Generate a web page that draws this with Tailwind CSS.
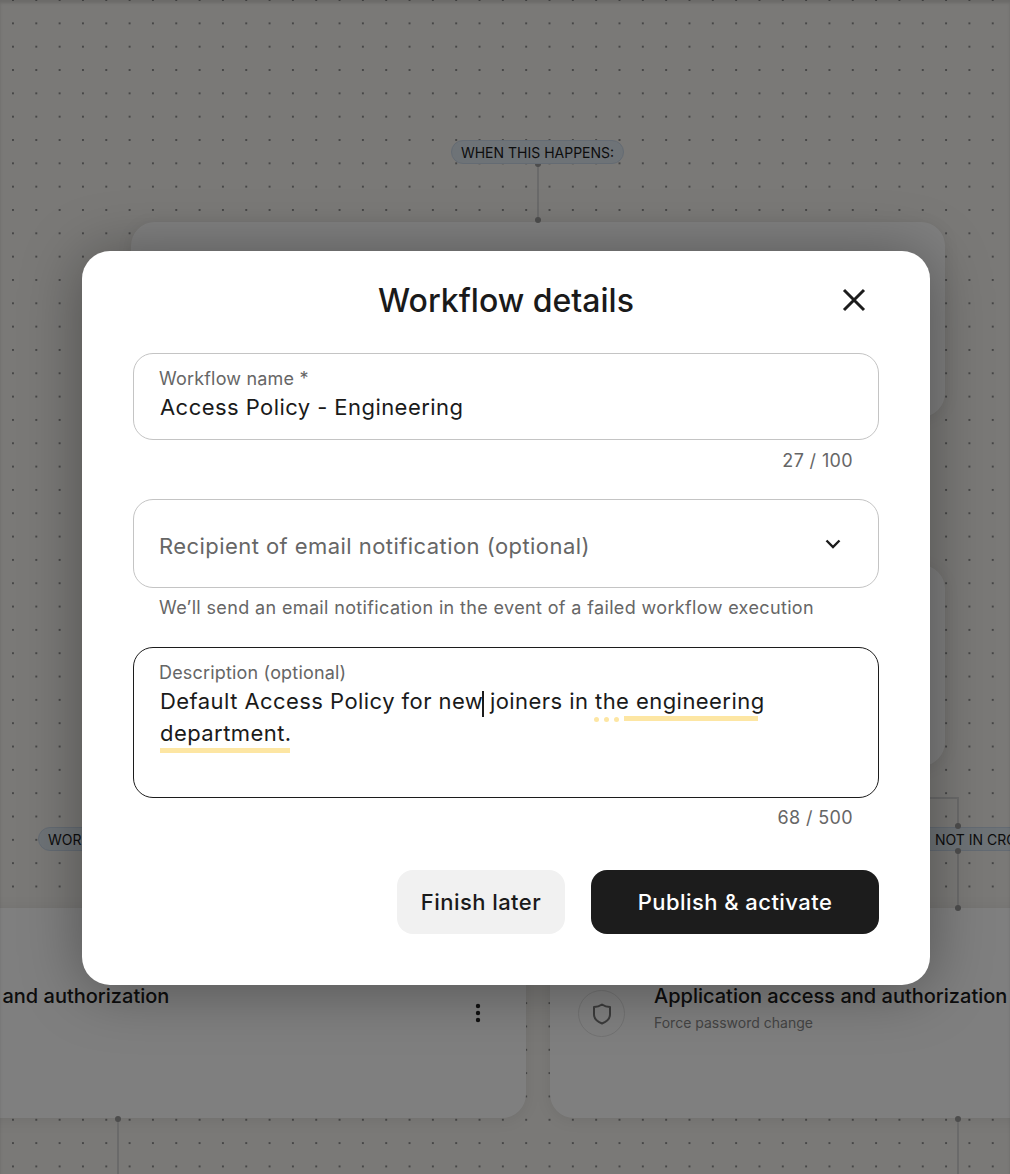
<!DOCTYPE html>
<html><head><meta charset="utf-8"><script src="https://cdn.jsdelivr.net/npm/@tailwindcss/browser@4"></script></head>
<body class="font-['Inter',sans-serif]">
<div class="relative w-[1010px] h-[1174px] overflow-hidden bg-[#f4f2ee] bg-[radial-gradient(circle,#8f8f8f_0.7px,transparent_1px)] bg-[size:23.33px_23.33px] bg-[position:1.3px_11.7px]">
  <!-- canvas -->
  <div class="absolute left-[131px] top-[222px] w-[814px] h-[195px] rounded-[24px] bg-white shadow-[0_2px_16px_rgba(0,0,0,0.08)]"></div>
  <div class="absolute left-[131px] top-[565px] w-[814px] h-[201px] rounded-[24px] bg-white shadow-[0_2px_16px_rgba(0,0,0,0.08)]"></div>
  <div class="absolute left-[-288px] top-[908px] w-[814px] h-[210px] rounded-[24px] bg-white shadow-[0_2px_16px_rgba(0,0,0,0.08)]">
    <div class="absolute left-[104px] top-[76px] text-[20px] leading-6 font-medium text-[#1a1a1a] whitespace-nowrap">Application access and authorization</div>
    <svg class="absolute left-[756px] top-[93px]" width="20" height="24" viewBox="0 0 20 24" fill="#222"><circle cx="10" cy="5" r="2.2"/><circle cx="10" cy="12" r="2.2"/><circle cx="10" cy="19" r="2.2"/></svg>
  </div>
  <div class="absolute left-[550px] top-[908px] w-[814px] h-[210px] rounded-[24px] bg-white shadow-[0_2px_16px_rgba(0,0,0,0.08)]">
    <div class="absolute left-[28px] top-[82px] w-[47px] h-[47px] rounded-full border border-[#e4e4e4] flex items-center justify-center">
      <svg width="24" height="24" viewBox="0 0 24 24" fill="none" stroke="#777" stroke-width="2" stroke-linejoin="round"><path d="M12 2.5c2.600 1.700 5.200 2.400 8 2.600v7.400c0 4-3.200 7-8 9-4.800-2-8-5-8-9V5.100c2.800-.2 5.400-.9 8-2.600z"/></svg>
    </div>
    <div class="absolute left-[104px] top-[76px] text-[20px] leading-6 font-medium text-[#1a1a1a] whitespace-nowrap">Application access and authorization</div>
    <div class="absolute left-[104px] top-[105px] text-[14px] leading-5 text-[#888] whitespace-nowrap">Force password change</div>
  </div>

  <div class="absolute left-[537px] top-[164px] w-[2px] h-[56px] bg-[#d4d4d4]"></div>
  <div class="absolute left-[535px] top-[161px] w-[6px] h-[6px] rounded-full bg-[#9a9a9a]"></div>
  <div class="absolute left-[535px] top-[217px] w-[6px] h-[6px] rounded-full bg-[#9a9a9a]"></div>
  <div class="absolute left-[451px] top-[140px] w-[173px] h-[24px] rounded-[12px] bg-[#dde6ee] border border-[#c8d6e6] flex items-center justify-center text-[14px] text-[#1a1a1a] whitespace-nowrap">WHEN THIS HAPPENS:</div>

  <div class="absolute left-[38px] top-[827px] w-[120px] h-[24px] rounded-[12px] bg-[#dde6ee] border border-[#c8d6e6] flex items-center pl-[9px] text-[14px] text-[#1a1a1a] whitespace-nowrap">WORKFLOW</div>
  <div class="absolute left-[900px] top-[827px] w-[160px] h-[24px] rounded-[12px] bg-[#dde6ee] border border-[#c8d6e6] flex items-center pl-[34px] text-[14px] text-[#1a1a1a] whitespace-nowrap">NOT IN CROWD</div>

  <div class="absolute left-[920px] top-[797px] w-[39px] h-[30px] border-t-2 border-r-2 border-[#d4d4d4]"></div>
  <div class="absolute left-[957px] top-[851px] w-[2px] h-[56px] bg-[#d4d4d4]"></div>
  <div class="absolute left-[955px] top-[823px] w-[6px] h-[6px] rounded-full bg-[#9a9a9a]"></div>
  <div class="absolute left-[955px] top-[848px] w-[6px] h-[6px] rounded-full bg-[#9a9a9a]"></div>
  <div class="absolute left-[955px] top-[905px] w-[6px] h-[6px] rounded-full bg-[#9a9a9a]"></div>
  <div class="absolute left-[117px] top-[1119px] w-[2px] h-[55px] bg-[#d4d4d4]"></div>
  <div class="absolute left-[115px] top-[1116px] w-[6px] h-[6px] rounded-full bg-[#9a9a9a]"></div>
  <div class="absolute left-[957px] top-[1119px] w-[2px] h-[55px] bg-[#d4d4d4]"></div>
  <div class="absolute left-[955px] top-[1116px] w-[6px] h-[6px] rounded-full bg-[#9a9a9a]"></div>

  <!-- overlay + modal -->
  <div class="absolute inset-0 bg-black/50 shadow-[inset_0_3px_3px_rgba(0,0,0,0.12)] pl-[82px] pt-[251px]">
    <div class="w-[848px] h-[734px] bg-white rounded-[28px] px-[51px] flex flex-col shadow-[0_4px_60px_rgba(0,0,0,0.35)]">
      <div class="relative h-[102px] shrink-0 flex items-center justify-center pb-[2px]">
        <h2 class="text-[32px] leading-10 font-medium text-[#1a1a1a]">Workflow details</h2>
        <svg class="absolute right-[13px] top-[37px]" width="24" height="24" viewBox="0 0 24 24" fill="none" stroke="#1c1c1c" stroke-width="3"><path d="M2 2l20 20M22 2L2 22"/></svg>
      </div>

      <div class="h-[87px] rounded-[20px] border border-[#c4c4c4] px-[25px] pt-[13px] shrink-0">
        <div class="text-[18px] leading-[24px] text-[#666] tracking-[0.01em]">Workflow name *</div>
        <div class="text-[22px] leading-[32px] text-[#1a1a1a] tracking-[0.02em] pl-px">Access Policy - Engineering</div>
      </div>
      <div class="h-[59px] shrink-0 pt-[9px] pr-[26px] text-right text-[18px] leading-6 text-[#666] tracking-[0.02em]">27 / 100</div>

      <div class="h-[89px] rounded-[20px] border border-[#c4c4c4] pl-[25px] pr-[35px] shrink-0 flex items-center justify-between">
        <span class="text-[22px] text-[#666] tracking-[0.02em] pt-[5px]">Recipient of email notification (optional)</span>
        <svg width="20" height="20" viewBox="0 0 20 20" fill="none" stroke="#1c1c1c" stroke-width="2.4"><path d="M3.500 6.500L10 13l6.500-6.500"/></svg>
      </div>
      <div class="h-[59px] shrink-0 pt-[8px] pl-[26px] text-[18px] leading-6 text-[#666] tracking-[0.02em] whitespace-nowrap">We’ll send an email notification in the event of a failed workflow execution</div>

      <div class="relative h-[151px] rounded-[20px] border border-[#1c1c1c] px-[25px] pt-[13px] shrink-0">
        <div class="text-[18px] leading-[24px] text-[#666] tracking-[0.01em]">Description (optional)</div>
        <div class="text-[22px] leading-[32px] text-[#1a1a1a] tracking-[0.02em] pl-px w-[640px]">Default Access Policy for new joiners in the engineering department.</div>
        <div class="absolute left-[348px] top-[43px] w-[2px] h-[26px] bg-[#1c1c1c]"></div>
        <div class="absolute left-[490px] top-[68px] w-[134px] h-[5px] bg-[#fde6a3]"></div>
        <div class="absolute left-[26px] top-[100px] w-[130px] h-[5px] bg-[#fde6a3]"></div>
        <div class="absolute left-[460px] top-[69px] w-[5px] h-[5px] rounded-full bg-[#fde6a3]"></div>
        <div class="absolute left-[470px] top-[69px] w-[5px] h-[5px] rounded-full bg-[#fde6a3]"></div>
        <div class="absolute left-[480px] top-[69px] w-[5px] h-[5px] rounded-full bg-[#fde6a3]"></div>
      </div>
      <div class="h-[72px] shrink-0 pt-[8px] pr-[26px] text-right text-[18px] leading-6 text-[#666] tracking-[0.02em]">68 / 500</div>

      <div class="flex justify-end gap-[26px]">
        <button class="w-[168px] h-[64px] rounded-[16px] bg-[#f1f1f1] text-[22px] font-medium text-[#1a1a1a] tracking-[0.02em]">Finish later</button>
        <button class="w-[288px] h-[64px] rounded-[16px] bg-[#1c1c1c] text-[22px] font-medium text-white tracking-[0.02em]">Publish &amp; activate</button>
      </div>
    </div>
  </div>
</div>
</body></html>
